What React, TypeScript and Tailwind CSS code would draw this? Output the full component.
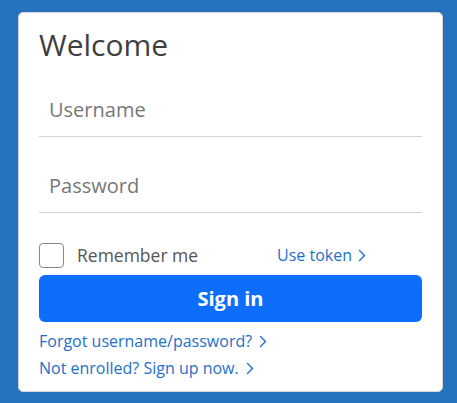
import React from "react";

function Chevron({ className = "" }: { className?: string }) {
  return (
    <svg className={className} width="8" height="13" viewBox="0 0 8 13" fill="none">
      <path d="M1.5 1.5 L6.5 6.5 L1.5 11.5" stroke="currentColor" strokeWidth="1.4" strokeLinecap="round" strokeLinejoin="round" />
    </svg>
  );
}

export default function App() {
  return (
    <div
      className="w-[457px] h-[403px] bg-[#2672be] pl-[18px] pt-[12px]"
      style={{ fontFamily: '"Open Sans", "Noto Sans", sans-serif' }}
    >
      <div className="w-[425px] h-[380px] bg-white border border-[#d6d6d6] rounded-[5px] px-5 flex flex-col">
        <h1 className="text-[30px] leading-[40px] text-[#3f3f3f] mt-[12px]">Welcome</h1>
        <div className="mt-[31px] border-b border-[#d4d4d4] h-[41px] flex items-start">
          <span className="pl-[10px] text-[20px] leading-[28px] text-[#777]">Username</span>
        </div>
        <div className="mt-[35px] border-b border-[#d4d4d4] h-[41px] flex items-start">
          <span className="pl-[10px] text-[20px] leading-[28px] text-[#777]">Password</span>
        </div>
        <div className="mt-[30px] flex items-center h-[25px]">
          <div className="w-[25px] h-[25px] border border-[#888] rounded-[4px]" />
          <span className="ml-[13px] text-[17.5px] text-[#555] leading-[25px]">Remember me</span>
          <a className="ml-auto mr-[54px] flex items-center gap-[6px] text-[16px] text-[#1e6fc8] leading-[25px] translate-x-[-2px]">
            Use token <Chevron />
          </a>
        </div>
        <button className="mt-[7px] h-[47px] w-full rounded-[6px] bg-[#0d6efd] text-white text-[20px] font-bold">
          Sign in
        </button>
        <a className="mt-[6px] flex items-center gap-[7px] text-[16px] text-[#1e6fc8] leading-[27px]">
          Forgot username/password? <Chevron />
        </a>
        <a className="flex items-center gap-[7px] text-[16px] text-[#1e6fc8] leading-[27px]">
          Not enrolled? Sign up now. <Chevron />
        </a>
      </div>
    </div>
  );
}
